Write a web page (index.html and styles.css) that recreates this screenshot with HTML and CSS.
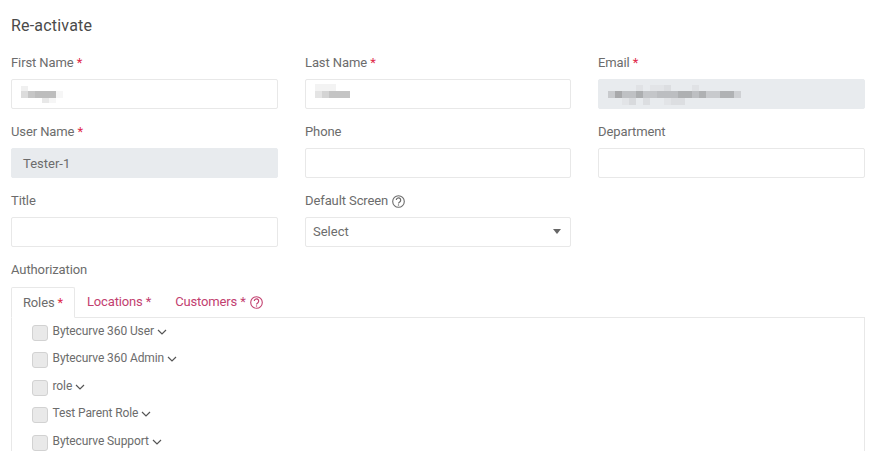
FILE: index.html
```html
<!DOCTYPE html>
<html lang="en">
<head>
<meta charset="utf-8">
<title>Re-activate</title>
<link rel="stylesheet" href="styles.css">
</head>
<body>
<main class="page">
  <h1 class="title">Re-activate</h1>
  <div class="grid">
    <div class="field">
      <div class="label">First Name <span class="req">*</span></div>
      <div class="box">
        <svg class="mosaic" width="42" height="17" viewBox="0 0 42 17" aria-hidden="true"><rect x="0" y="0" width="7" height="5" fill="#f0f0f0"/><rect x="0" y="5" width="7" height="7" fill="#dcdcdc"/><rect x="7" y="5" width="7" height="7" fill="#c6c6c6"/><rect x="14" y="5" width="21" height="7" fill="#bdbdbd"/><rect x="35" y="5" width="7" height="7" fill="#f6f6f6"/><rect x="21" y="12" width="7" height="5" fill="#e8e8e8"/><rect x="28" y="12" width="7" height="5" fill="#f6f6f6"/></svg>
      </div>
    </div>
    <div class="field">
      <div class="label">Last Name <span class="req">*</span></div>
      <div class="box">
        <svg class="mosaic mosaic-up" width="35" height="14" viewBox="0 0 35 14" aria-hidden="true"><rect x="0" y="0" width="21" height="7" fill="#f3f3f3"/><rect x="0" y="7" width="7" height="7" fill="#e4e4e4"/><rect x="7" y="7" width="7" height="7" fill="#d4d4d4"/><rect x="14" y="7" width="21" height="7" fill="#c4c4c4"/></svg>
      </div>
    </div>
    <div class="field">
      <div class="label">Email <span class="req">*</span></div>
      <div class="box disabled">
        <svg class="mosaic mosaic-down" width="133" height="20" viewBox="0 0 133 20" aria-hidden="true"><rect x="28" y="0" width="7" height="6" fill="#e0e2e5"/><rect x="42" y="0" width="14" height="6" fill="#e2e4e7"/><rect x="56" y="0" width="7" height="6" fill="#dcdee1"/><rect x="84" y="0" width="7" height="6" fill="#e0e2e5"/><rect x="0" y="6" width="7" height="7" fill="#c8cacd"/><rect x="7" y="6" width="7" height="7" fill="#a8a9ab"/><rect x="14" y="6" width="14" height="7" fill="#bfc1c4"/><rect x="28" y="6" width="7" height="7" fill="#acaeb0"/><rect x="35" y="6" width="14" height="7" fill="#c4c6c9"/><rect x="49" y="6" width="21" height="7" fill="#bcbec1"/><rect x="70" y="6" width="14" height="7" fill="#aeb0b2"/><rect x="84" y="6" width="7" height="7" fill="#bdbfc2"/><rect x="91" y="6" width="7" height="7" fill="#afb1b3"/><rect x="98" y="6" width="14" height="7" fill="#c8cacd"/><rect x="112" y="6" width="14" height="7" fill="#b0b2b4"/><rect x="126" y="6" width="7" height="7" fill="#cfd1d4"/><rect x="14" y="13" width="7" height="7" fill="#e2e4e7"/><rect x="21" y="13" width="7" height="7" fill="#d8dadd"/><rect x="35" y="13" width="7" height="7" fill="#dcdee1"/><rect x="56" y="13" width="7" height="7" fill="#e2e4e7"/><rect x="63" y="13" width="14" height="7" fill="#dcdee1"/></svg>
      </div>
    </div>

    <div class="field">
      <div class="label">User Name <span class="req">*</span></div>
      <div class="box disabled wide">Tester-1</div>
    </div>
    <div class="field">
      <div class="label">Phone</div>
      <div class="box"></div>
    </div>
    <div class="field">
      <div class="label">Department</div>
      <div class="box"></div>
    </div>

    <div class="field">
      <div class="label">Title</div>
      <div class="box"></div>
    </div>
    <div class="field">
      <div class="label">Default Screen <svg class="help" width="13" height="13" viewBox="0 0 13 13" aria-hidden="true"><circle cx="6.5" cy="6.5" r="5.8" fill="none" stroke="currentColor" stroke-width="1.1"/><path d="M4.3 5.1a2.2 2.2 0 1 1 3.4 1.8c-.8.5-1.2.8-1.2 1.7" fill="none" stroke="currentColor" stroke-width="1.2"/><rect x="5.9" y="9.4" width="1.2" height="1.2" fill="currentColor"/></svg></div>
      <div class="box select">Select<span class="caret"></span></div>
    </div>
  </div>

  <div class="label auth">Authorization</div>
  <nav class="tabs">
    <div class="tab active">Roles <span class="req">*</span></div>
    <div class="tab">Locations <span>*</span></div>
    <div class="tab">Customers <span>*</span> <svg class="help" width="13" height="13" viewBox="0 0 13 13" aria-hidden="true"><circle cx="6.5" cy="6.5" r="5.8" fill="none" stroke="currentColor" stroke-width="1.1"/><path d="M4.3 5.1a2.2 2.2 0 1 1 3.4 1.8c-.8.5-1.2.8-1.2 1.7" fill="none" stroke="currentColor" stroke-width="1.2"/><rect x="5.9" y="9.4" width="1.2" height="1.2" fill="currentColor"/></svg></div>
  </nav>
  <ul class="roles">
    <li class="role"><span class="check"></span>Bytecurve 360 User<svg class="chev" width="10" height="6" viewBox="0 0 10 6" aria-hidden="true"><path d="M1 1l4 4 4-4" fill="none" stroke="currentColor" stroke-width="1.2"/></svg></li>
    <li class="role"><span class="check"></span>Bytecurve 360 Admin<svg class="chev" width="10" height="6" viewBox="0 0 10 6" aria-hidden="true"><path d="M1 1l4 4 4-4" fill="none" stroke="currentColor" stroke-width="1.2"/></svg></li>
    <li class="role"><span class="check"></span>role<svg class="chev" width="10" height="6" viewBox="0 0 10 6" aria-hidden="true"><path d="M1 1l4 4 4-4" fill="none" stroke="currentColor" stroke-width="1.2"/></svg></li>
    <li class="role"><span class="check"></span>Test Parent Role<svg class="chev" width="10" height="6" viewBox="0 0 10 6" aria-hidden="true"><path d="M1 1l4 4 4-4" fill="none" stroke="currentColor" stroke-width="1.2"/></svg></li>
    <li class="role"><span class="check"></span>Bytecurve Support<svg class="chev" width="10" height="6" viewBox="0 0 10 6" aria-hidden="true"><path d="M1 1l4 4 4-4" fill="none" stroke="currentColor" stroke-width="1.2"/></svg></li>
  </ul>
</main>
</body>
</html>
```
FILE: styles.css
```css
* { box-sizing: border-box; }
html, body { margin: 0; height: 451px; overflow: hidden; background: #fff; }
body { font-family: Roboto, "Liberation Sans", sans-serif; font-size: 13px; color: #6c6c6c; }
.page { padding: 16px 14px 0 11px; }
.title { margin: 0 0 18px; font-size: 16px; font-weight: 400; line-height: 19px; color: #4a4a4a; letter-spacing: 0.2px; }
.grid { display: grid; grid-template-columns: 267px 266px 267px; column-gap: 27px; row-gap: 13px; }
.field { display: flex; flex-direction: column; }
.label { height: 18px; line-height: 20px; margin-bottom: 8px; color: #6c6c6c; white-space: nowrap; letter-spacing: -0.1px; }
.req { color: #e0294a; }
.box { height: 30px; border: 1px solid #e8e8e8; border-radius: 2px; display: flex; align-items: center; padding-left: 9px; background: #fff; }
.box.disabled { background: #e8ebee; border-color: #e8ebee; }
.box.wide { padding-left: 11px; }
.select { padding: 0 9px 2px 7px; justify-content: space-between; }
.caret { width: 0; height: 0; margin-top: 1px; border-left: 4px solid transparent; border-right: 4px solid transparent; border-top: 5px solid #666; }
.help { display: inline-block; vertical-align: -3px; margin-left: 1px; }
.mosaic { display: block; flex: none; }
.mosaic-up { margin-bottom: 6px; }
.mosaic-down { margin-top: 2px; }
.auth { margin-top: 13px; margin-bottom: 0; }
.tabs { display: flex; height: 31px; margin-top: 9px; border-bottom: 1px solid #e8e8e8; letter-spacing: -0.15px; }
.tab { white-space: nowrap; line-height: 29px; padding: 0 12px; color: #c2406f; height: 31px; }
.tab.active { color: #6c6c6c; border: 1px solid #e8e8e8; border-bottom: 1px solid #fff; border-radius: 2px 2px 0 0; padding: 0 11px; }
.roles { list-style: none; margin: 0; padding: 6.5px 0 0 20px; border: 1px solid #e8e8e8; border-top: 0; width: 854px; height: 140px; font-size: 12px; letter-spacing: -0.1px; }
.role { display: flex; align-items: flex-start; height: 16px; margin-bottom: 11.5px; line-height: 13px; }
.check { width: 16px; height: 16px; background: #e9e9e9; border: 1px solid #d2d2d2; border-radius: 3px; margin-right: 4.5px; flex: none; }
.chev { display: block; margin-left: 3px; margin-top: 4px; color: #555; flex: none; }
```
